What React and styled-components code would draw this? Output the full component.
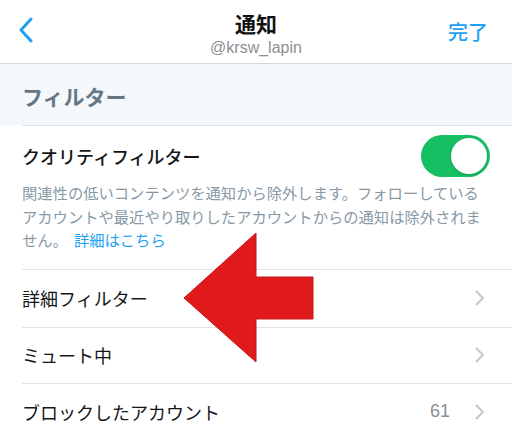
import React from 'react'
import styled, { createGlobalStyle } from 'styled-components'

const GlobalStyle = createGlobalStyle`
  html, body {
    margin: 0;
    padding: 0;
    background: #fff;
  }
  body {
    font-family: "Noto Sans CJK JP", "Liberation Sans", sans-serif;
    width: 512px;
    height: 427px;
    overflow: hidden;
  }
`

const Page = styled.div`
  position: relative;
  width: 512px;
  height: 427px;
  overflow: hidden;
  background: #fff;
`

const NavBar = styled.div`
  display: grid;
  grid-template-columns: 80px 1fr 80px;
  align-items: center;
  height: 63px;
  border-bottom: 1px solid #d6d9dc;
`

const BackButton = styled.div`
  display: flex;
  align-items: center;
  padding-left: 18px;
  height: 100%;
  padding-bottom: 4px;
  box-sizing: border-box;
`

const TitleBlock = styled.div`
  display: flex;
  flex-direction: column;
  align-items: center;
  padding-top: 5px;
`

const Title = styled.div`
  font-size: 21px;
  font-weight: 700;
  color: #111;
  line-height: 26px;
`

const Handle = styled.div`
  font-family: "Liberation Sans", sans-serif;
  font-size: 16px;
  color: #8e8e93;
  line-height: 22px;
  margin-top: 1px;
`

const DoneButton = styled.div`
  justify-self: end;
  padding-right: 24px;
  font-size: 20px;
  font-weight: 500;
  color: #1da1f2;
  padding-bottom: 1px;
`

const SectionHeader = styled.div`
  background: #f5f8fa;
  height: 61px;
  display: flex;
  align-items: center;
  padding-left: 22px;
  font-size: 21px;
  font-weight: 700;
  color: #657786;
  padding-top: 2px;
  box-sizing: border-box;
`

const Group = styled.div`
  padding-left: 22px;
`

const Cell = styled.div`
  border-top: 1px solid #e1e5e8;
  padding-right: 26px;
`

const CellRow = styled.div`
  display: flex;
  align-items: center;
  height: ${(p) => p.$h || 56}px;
`

const CellLabel = styled.div`
  flex: 1;
  font-size: 18px;
  color: #14171a;
  font-weight: ${(p) => (p.$strong ? 500 : 400)};
`

const CellValue = styled.div`
  font-family: "Liberation Sans", sans-serif;
  font-size: 18px;
  color: #8e8e93;
  margin-right: 24px;
`

const Toggle = styled.div`
  position: relative;
  width: 69px;
  height: 42px;
  margin-right: -4px;
  border-radius: 21px;
  background: #17bf63;
  &::after {
    content: '';
    position: absolute;
    right: 3px;
    top: 3px;
    width: 36px;
    height: 36px;
    border-radius: 50%;
    background: #fff;
    box-shadow: 0 1px 3px rgba(0, 0, 0, 0.2);
  }
`

const Description = styled.div`
  font-size: 15.3px;
  line-height: 23.5px;
  color: #8899a6;
  margin-right: -4px;
  padding-bottom: 17px;
  margin-top: -4px;
`

const Link = styled.span`
  color: #1da1f2;
  padding-left: 6px;
`

const Arrow = styled.svg`
  position: absolute;
  left: 0;
  top: 0;
  pointer-events: none;
`

const Chevron = () => (
  <svg width="12" height="18" viewBox="0 0 12 18">
    <path d="M2 2 L9 9 L2 16" fill="none" stroke="#c4c4c9" strokeWidth="1.8" />
  </svg>
)

const rows = [
  { label: '詳細フィルター', h: 57 },
  { label: 'ミュート中', h: 55 },
  { label: 'ブロックしたアカウント', value: '61', h: 56 },
]

export default function App() {
  return (
    <Page>
      <GlobalStyle />
      <NavBar>
        <BackButton>
          <svg width="16" height="26" viewBox="0 0 16 26">
            <path
              d="M13 2 L3 13 L13 24"
              fill="none"
              stroke="#1da1f2"
              strokeWidth="3"
              strokeLinecap="round"
              strokeLinejoin="round"
            />
          </svg>
        </BackButton>
        <TitleBlock>
          <Title>通知</Title>
          <Handle>@krsw_lapin</Handle>
        </TitleBlock>
        <DoneButton>完了</DoneButton>
      </NavBar>
      <SectionHeader>フィルター</SectionHeader>
      <Group>
        <Cell>
          <CellRow $h={59}>
            <CellLabel $strong>クオリティフィルター</CellLabel>
            <Toggle />
          </CellRow>
          <Description>
            関連性の低いコンテンツを通知から除外します。フォローしているアカウントや最近やり取りしたアカウントからの通知は除外されません。
            <Link>詳細はこちら</Link>
          </Description>
        </Cell>
        {rows.map((r) => (
          <Cell key={r.label}>
            <CellRow $h={r.h}>
              <CellLabel>{r.label}</CellLabel>
              {r.value && <CellValue>{r.value}</CellValue>}
              <Chevron />
            </CellRow>
          </Cell>
        ))}
      </Group>
      <Arrow width="512" height="427" viewBox="0 0 512 427">
        <polygon
          points="184,298 256,233 256,277 313,277 313,319 256,319 256,362"
          fill="#e0191b"
          stroke="#c8161a"
          strokeWidth="1"
        />
      </Arrow>
    </Page>
  )
}
